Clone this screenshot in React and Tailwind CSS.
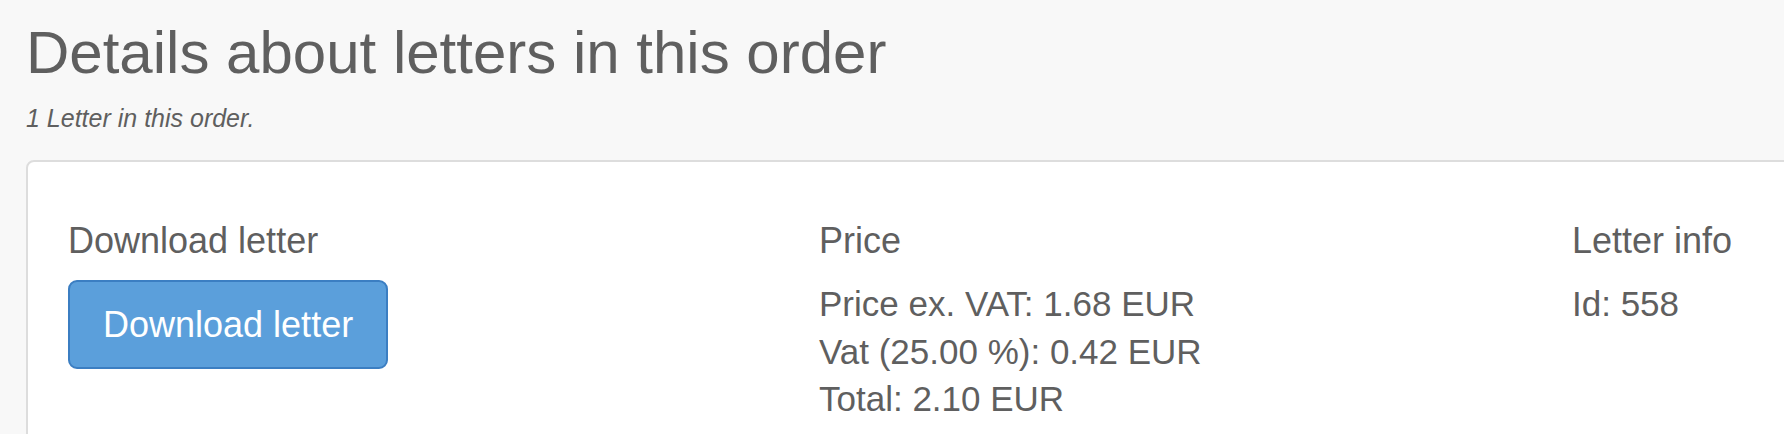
import React from 'react';

const letter = {
  id: 558,
  priceExVat: '1.68',
  vatRate: '25.00',
  vat: '0.42',
  total: '2.10',
  currency: 'EUR',
};

const Section = ({ title, children }) => (
  <div className="flex flex-col">
    <h4 className="text-[36px] leading-[40px] font-normal">{title}</h4>
    <div className="mt-[19px]">{children}</div>
  </div>
);

export default function App() {
  return (
    <div
      className="w-full h-[434px] overflow-hidden bg-[#f8f8f8] text-[#5f5f5f] pl-[26px]"
      style={{ fontFamily: '"Liberation Sans", Arial, Helvetica, sans-serif' }}
    >
      {/* Заголовок */}
      <h1 className="pt-[20px] text-[60px] leading-[66px] font-normal whitespace-nowrap">
        Details about letters in this order
      </h1>
      <p className="mt-[17px] text-[25px] leading-[30px] italic">1 Letter in this order.</p>

      {/* Панель с письмом */}
      <div className="mt-[27px] w-[2400px] h-[400px] bg-white border-2 border-[#dddddd] rounded-[8px] pl-[40px] pt-[59px]">
        <div className="grid grid-cols-[751px_753px_751px]">
          <Section title="Download letter">
            <button className="bg-[#5b9fdb] border-2 border-[#3b7ec2] rounded-[9px] text-white text-[36px] leading-[39px] px-[33px] py-[23px]">
              Download letter
            </button>
          </Section>

          <Section title="Price">
            <div className="text-[35px] leading-[47.5px]">
              <p>Price ex. VAT: {letter.priceExVat} {letter.currency}</p>
              <p>Vat ({letter.vatRate} %): {letter.vat} {letter.currency}</p>
              <p>Total: {letter.total} {letter.currency}</p>
            </div>
          </Section>

          <Section title="Letter info">
            <div className="text-[35px] leading-[47.5px]">
              <p>Id: {letter.id}</p>
            </div>
          </Section>
        </div>
      </div>
    </div>
  );
}
